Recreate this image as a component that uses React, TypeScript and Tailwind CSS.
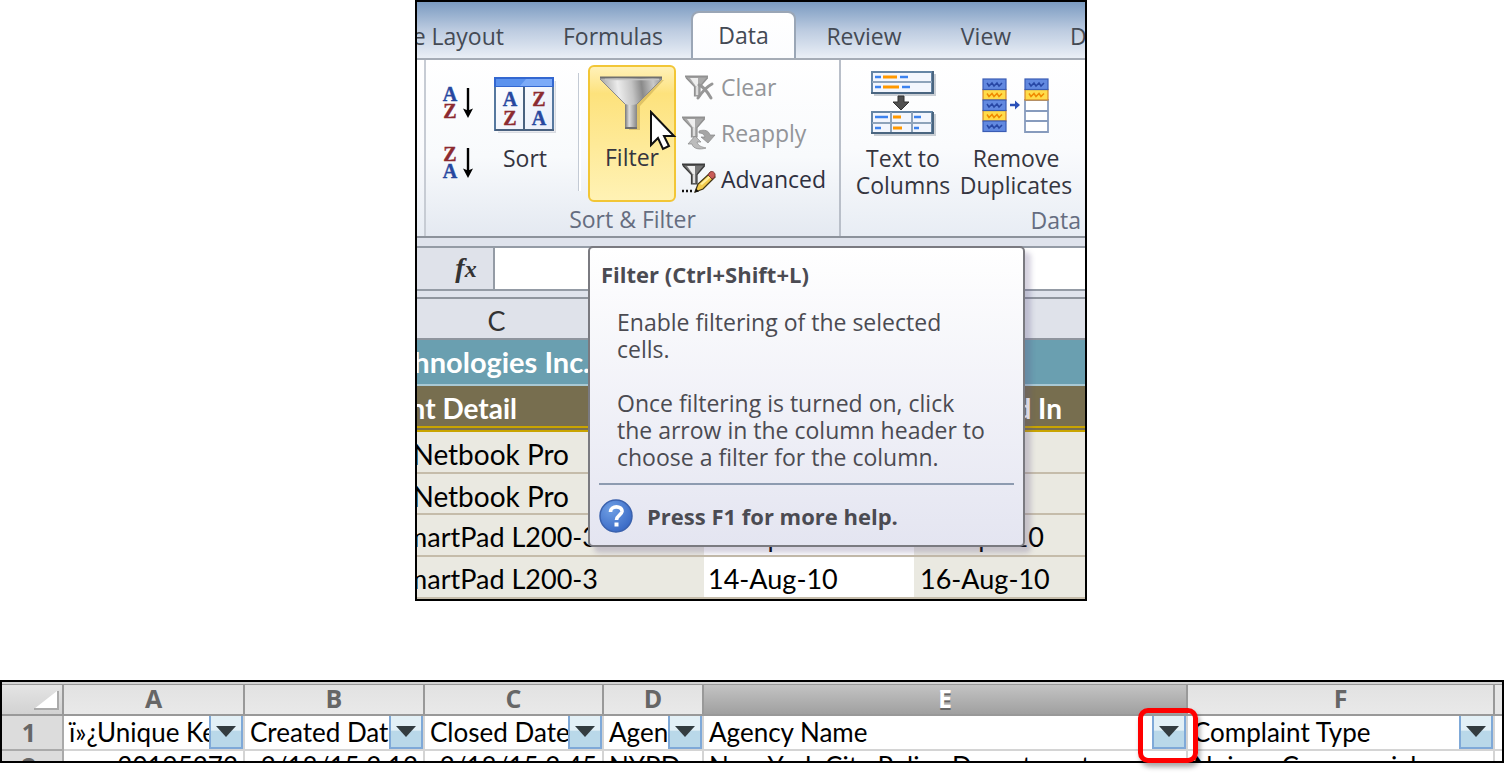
import React from "react";

const ui = "font-['Open_Sans','Noto_Sans',sans-serif]";
const cal = "font-['Lato','Noto_Sans',sans-serif]";

function Letter({ x, y, c }: { x: number; y: number; c: "A" | "Z" }) {
  const color = c === "A" ? "#27479f" : "#8c2a30";
  return (
    <text x={x} y={y} fontSize="20" fontWeight="bold" fontFamily="Liberation Serif, serif" textAnchor="middle" fill={color} stroke={color} strokeWidth=".4">
      {c}
    </text>
  );
}

function SortArrow({ first, second }: { first: "A" | "Z"; second: "A" | "Z" }) {
  return (
    <svg width="34" height="36" viewBox="0 0 34 36" overflow="visible" aria-hidden="true">
      <Letter x={8} y={15} c={first} />
      <Letter x={8} y={32} c={second} />
      <path d="M26 2v24" stroke="#000" strokeWidth="2.4" />
      <path d="M21 22.500l5 2 5-2-5 9.500z" fill="#000" />
    </svg>
  );
}

function SortIcon() {
  return (
    <svg width="62" height="56" viewBox="0 0 62 56" aria-hidden="true">
      <defs>
        <linearGradient id="sortBody" x1="0" y1="0" x2="1" y2="1">
          <stop offset="0" stopColor="#fff" />
          <stop offset="1" stopColor="#e9eefa" />
        </linearGradient>
      </defs>
      <path d="M4 55.500h57.500V4" stroke="#d9dce2" strokeWidth="2" fill="none" />
      <rect x="1" y="1" width="58" height="52" fill="url(#sortBody)" stroke="#56789f" strokeWidth="2" />
      <rect x="0" y="0" width="60" height="10" fill="#3367d0" />
      <rect x="2" y="2" width="56" height="7" fill="#5b92ee" />
      <path d="M32 2h26v7H26z" fill="#7caaf8" />
      <path d="M30 10v43M1 53h59" stroke="#49617f" strokeWidth="2" />
      <Letter x={16} y={29} c="A" />
      <Letter x={16} y={48} c="Z" />
      <Letter x={45} y={29} c="Z" />
      <Letter x={45} y={48} c="A" />
    </svg>
  );
}

function FunnelIcon() {
  return (
    <svg width="66" height="56" viewBox="0 0 66 56" aria-hidden="true">
      <defs>
        <linearGradient id="cone" x1="0" y1=".1" x2="1" y2="0">
          <stop offset="0" stopColor="#a5a5a5" />
          <stop offset=".28" stopColor="#ececec" />
          <stop offset=".5" stopColor="#c4c4c4" />
          <stop offset=".66" stopColor="#8a8a8a" />
          <stop offset=".85" stopColor="#c9c9c9" />
          <stop offset="1" stopColor="#909090" />
        </linearGradient>
        <linearGradient id="stem" x1="0" y1="0" x2="1" y2="0">
          <stop offset="0" stopColor="#777" />
          <stop offset=".35" stopColor="#ddd" />
          <stop offset="1" stopColor="#858585" />
        </linearGradient>
      </defs>
      <path d="M5 4h60L41 30v24H30V30z" fill="#a98832" opacity=".35" />
      <path d="M1 2h62v1L38 28v24H26V28L1 3z" fill="url(#cone)" />
      <path d="M26 28q6 2 12 0v24H26z" fill="url(#stem)" />
      <path d="M1 3l25 25M63 3L38 28" stroke="#8a8a8a" strokeWidth="1" />
      <path d="M1 1.500h62M26 52h12" stroke="#6f6f6f" strokeWidth="2" />
      <path d="M6 3.500h54" stroke="#c5c5c5" strokeWidth="1.500" />
    </svg>
  );
}

function SmallFunnel({ dark = false }: { dark?: boolean }) {
  const edge = dark ? "#3c3c3c" : "#919191";
  return (
    <>
      <path d="M1 1.500h22v2L15 12v9H9.500v-9L1 3.500z" fill={dark ? "#777" : "#aaa"} />
      <path d="M5 3h8v9l-2-.5z" fill="#eee" />
      <path d="M11 12h2v8h-2z" fill="#ddd" />
      <path d="M0 1.500h23" stroke={edge} strokeWidth="2" />
      <path d="M1 2.500l8.500 9v9.500H15v-9.500l7.500-9" fill="none" stroke={edge} strokeWidth="1.200" />
    </>
  );
}

function ClearIcon() {
  return (
    <svg width="34" height="32" viewBox="0 0 34 32" aria-hidden="true">
      <g transform="translate(3 4)"><SmallFunnel /></g>
      <path d="M17 14c5 2 8 6 12 13M30 13c-6 3-10 8-14 14" stroke="#979797" strokeWidth="3" strokeLinecap="round" fill="none" />
    </svg>
  );
}

function ReapplyIcon() {
  return (
    <svg width="34" height="34" viewBox="0 0 34 34" aria-hidden="true">
      <SmallFunnel />
      <path d="M17 15c6-2 10 0 11 4h5l-7 8-7-6h4c-1-3-3-4-6-4z" fill="#a5a5a5" stroke="#888" strokeWidth=".7" />
      <path d="M6 28l7-8 6 6h-4c1 4 5 5 9 6-6 2-13 1-14-4z" fill="#bcbcbc" stroke="#888" strokeWidth=".7" />
    </svg>
  );
}

function AdvancedIcon() {
  return (
    <svg width="34" height="32" viewBox="0 0 34 32" aria-hidden="true">
      <SmallFunnel dark />
      <path d="M0 28h2M4 28h2M8 28h2" stroke="#111" strokeWidth="2.500" />
      <path d="M13 29l3-8L28 10l5 4-12 12z" fill="#f3cb4d" stroke="#403515" strokeWidth="1.300" />
      <path d="M18 21l10-9 1 2-9 8z" fill="#fff0a0" />
      <path d="M26 12l2-3c3-2 7 2 4 6l-2 1z" fill="#c95c58" stroke="#7e3834" />
      <path d="M13 29.500l1-4 3 3z" fill="#111" />
    </svg>
  );
}

function TextToColumnsIcon() {
  return (
    <svg width="66" height="66" viewBox="0 0 66 66" aria-hidden="true">
      <path d="M4 25h61V4M4 65h61V44" stroke="#c9ced4" strokeWidth="2" fill="none" />
      <g fill="#f3f6fd" stroke="#6585a5" strokeWidth="2">
        <path d="M2 2h60v21H2zM2 42h60v21H2z" />
        <path d="M2 12h60M2 53h60M21 42v21M42 42v21" fill="none" stroke="#8ea3ba" />
      </g>
      <path d="M1 23h62V1M1 63h62V42" stroke="#4a6580" strokeWidth="2" fill="none" />
      <path d="M5 7h6M30 7h8M5 17h6M32 17h8M5 47h13M44 47h7M5 58h6M44 58h5" stroke="#3c82ee" strokeWidth="2.600" />
      <path d="M13 7h14M13 17h16M23 47h8M23 58h9" stroke="#ff9800" strokeWidth="3" />
      <path d="M28 26h6v6h5l-8 8-8-8h5z" fill="#505050" stroke="#333" />
    </svg>
  );
}

function Squiggle({ x, y, gold = false }: { x: number; y: number; gold?: boolean }) {
  return (
    <g transform={`translate(${x} ${y})`}>
      <rect width="23" height="10.500" fill={gold ? "#ffdc4a" : "#6289e0"} stroke={gold ? "#d48728" : "#3a5cb4"} strokeWidth="1.200" />
      <path d="M4 4l2 3 3-3 2 3 3-3 2 3 3-3" fill="none" stroke={gold ? "#f08a00" : "#2747a5"} strokeWidth="1.500" />
    </g>
  );
}

function RemoveDuplicatesIcon() {
  return (
    <svg width="68" height="56" viewBox="0 0 68 56" aria-hidden="true">
      <Squiggle x={1} y={11.5} gold />
      <Squiggle x={1} y={32.5} gold />
      <Squiggle x={1} y={1} />
      <Squiggle x={1} y={22} />
      <Squiggle x={1} y={43} />
      <path d="M28 27h7" stroke="#2a50b8" strokeWidth="2.500" />
      <path d="M33 22.500l5 4.500-5 4.500z" fill="#2a50b8" />
      <path d="M43 22h23v32H43zM43 33h23M43 43h23" fill="#fff" stroke="#879bbd" strokeWidth="1.800" />
      <Squiggle x={43} y={11.5} gold />
      <Squiggle x={43} y={1} />
    </svg>
  );
}

function Pointer() {
  return (
    <svg className="absolute left-[232px] top-[108px]" width="28" height="42" viewBox="0 0 28 42" aria-hidden="true">
      <path d="M2 2v33l7-7 5 11 6-3-5-10h10z" fill="#fff" stroke="#111" strokeWidth="2" />
    </svg>
  );
}

const tab = "h-full text-[23px] leading-[30px] text-[#444a54] whitespace-nowrap pt-[12px]";

function Tabs() {
  return (
    <nav className="flex h-[58px] items-stretch overflow-hidden border-b-2 border-[#a5acb6] bg-linear-to-b from-[#7b9bc1] via-[#bccbe0] via-50% to-[#eaeff6]">
      <div className="flex w-[87px] shrink-0 justify-end"><button className={tab}>e Layout</button></div>
      <button className={`${tab} ml-[59px] w-[100px] shrink-0`}>Formulas</button>
      <button className="-mb-[2px] ml-[28px] mt-[9px] h-[49px] w-[105px] shrink-0 rounded-t-lg border-2 border-b-0 border-[#9aa6b6] bg-linear-to-b from-white to-[#fbfcfe] pb-[4px] text-[23px] leading-[30px] text-[#444a54]">Data</button>
      <button className={`${tab} ml-[29px] w-[78px] shrink-0`}>Review</button>
      <button className={`${tab} ml-[55px] w-[56px] shrink-0`}>View</button>
      <button className={`${tab} ml-[56px] shrink-0`}>D</button>
    </nav>
  );
}

const big = "text-[23px] leading-[27px] text-[#35353f]";

function Ribbon() {
  return (
    <div className="flex h-[178px] overflow-hidden border-b-2 border-[#8c929b] bg-linear-to-b from-white via-[#fafbfd] to-[#e8edf4]">
      <div className="w-[9px] shrink-0 border-r-2 border-[#c7ccd4]" />
      <section className="flex w-[415px] shrink-0 flex-col border-r-2 border-[#b9bfc9] bg-linear-to-b from-white via-[#f8fafc] via-55% to-[#e4e9f1]">
        <div className="flex h-[143px] pt-[5px]">
          <div className="ml-[16px] flex w-[34px] flex-col gap-[24px] pt-[21px]">
            <button aria-label="Sort A to Z"><SortArrow first="A" second="Z" /></button>
            <button aria-label="Sort Z to A"><SortArrow first="Z" second="A" /></button>
          </div>
          <button className={`${big} ml-[18px] flex w-[62px] flex-col items-center gap-[12px] pt-[12px]`}>
            <SortIcon />
            Sort
          </button>
          <div className="ml-[22px] mt-[8px] h-[118px] w-[3px] border-l border-[#c3cad4] bg-white" />
          <button className={`${big} ml-[7px] flex h-[137px] w-[88px] flex-col items-center gap-[12px] rounded-md border-2 border-[#f2c636] bg-linear-to-b from-[#fff1b8] via-[#fde27c] via-20% to-[#fff2b4] pt-[9px]`}>
            <FunnelIcon />
            Filter
          </button>
          <div className="-mt-[1px] ml-[6px] flex flex-col text-[23px] leading-[46px]">
            <button className="flex items-center gap-[5px] text-[#939599]"><ClearIcon />Clear</button>
            <button className="flex items-center gap-[5px] text-[#939599]"><ReapplyIcon />Reapply</button>
            <button className="flex items-center gap-[5px] text-[#2e3040]"><AdvancedIcon />Advanced</button>
          </div>
        </div>
        <div className="text-center text-[23px] leading-[34px] text-[#656d80]">Sort &amp; Filter</div>
      </section>
      <section className="min-w-0 flex-1">
        <div className="flex h-[143px] pt-[10px]">
          <button className={`${big} ml-[12px] flex w-[100px] shrink-0 flex-col items-center gap-[9px]`}>
            <TextToColumnsIcon />
            <span>Text to<br />Columns</span>
          </button>
          <button className={`${big} ml-[4px] flex w-[118px] shrink-0 flex-col items-center gap-[11px] pt-[8px]`}>
            <RemoveDuplicatesIcon />
            <span>Remove<br />Duplicates</span>
          </button>
        </div>
        <div className="pr-[4px] text-right text-[23px] leading-[34px] text-[#656d80]">Data</div>
      </section>
    </div>
  );
}

function FormulaBar() {
  return (
    <div className="mt-[8px] flex h-[45px] border-y-2 border-[#949ba5] bg-white">
      <button className="w-[78px] border-r-2 border-[#949ba5] bg-[#dfe2ea] pl-[22px] font-['Liberation_Serif',serif] text-[28px] font-bold italic leading-[36px] text-[#333]">
        f<span className="text-[24px]">x</span>
      </button>
      <input aria-label="Formula" className="min-w-0 flex-1 bg-transparent outline-none" />
    </div>
  );
}

function Clipped({ children, pad }: { children: React.ReactNode; pad: string }) {
  return <div className={`flex justify-end overflow-hidden whitespace-nowrap ${pad}`}>{children}</div>;
}

const line = "border-b-2 border-[#c5bcaa] pb-0 pt-[4px]";
const headCell = "border-b-2 border-t-2 border-[#8f959e] pb-0 pt-[4px]";
const goldLine = "border-b-6 border-double border-[#c9a400] pb-0 pt-[4px]";

function Sheet() {
  return (
    <table className={`${cal} mt-[6px] w-full table-fixed border-separate border-spacing-0 text-left text-[27px] leading-[34px] text-black`}>
      <colgroup><col className="w-[287px]" /><col className="w-[210px]" /><col /></colgroup>
      <thead>
        <tr className="h-[43px] bg-[#dfe2ea] text-[#333]">
          <th className={`${headCell} pr-[128px] text-center font-normal`}>C</th>
          <th className={headCell} />
          <th className={headCell} />
        </tr>
      </thead>
      <tbody>
        <tr className="h-[46px] bg-[#6a9fb0] text-[29px] font-bold text-white">
          <td className="border-b-2 border-[#a9c9d4]"><Clipped pad="pr-[114px]">hnologies Inc.</Clipped></td>
          <td className="border-b-2 border-[#a9c9d4]" /><td className="border-b-2 border-[#a9c9d4]" />
        </tr>
        <tr className="h-[46px] bg-[#776e4f] text-[28px] font-bold text-white">
          <td className={goldLine}><Clipped pad="pr-[187px]">nt Detail</Clipped></td>
          <td className={goldLine} />
          <td className={goldLine}><Clipped pad="pr-[23px]">Turned In</Clipped></td>
        </tr>
        <tr className="h-[42px] bg-[#eae9e1] text-[28px]"><td className={line}><Clipped pad="pr-[135px]">Netbook Pro</Clipped></td><td className={line} /><td className={line} /></tr>
        <tr className="h-[41px] bg-[#eae9e1] text-[28px]"><td className={line}><Clipped pad="pr-[135px]">Netbook Pro</Clipped></td><td className={line} /><td className={line} /></tr>
        <tr className="h-[42px] bg-[#eae9e1]">
          <td className={line}><Clipped pad="pr-[106px]">SmartPad L200-3</Clipped></td>
          <td className={`${line} bg-white pl-[4px]`}>10-Apr-10</td>
          <td className={line}><Clipped pad="pr-[41px]">12-Apr-10</Clipped></td>
        </tr>
        <tr className="h-[42px] bg-[#eae9e1]">
          <td className={line}><Clipped pad="pr-[106px]">SmartPad L200-3</Clipped></td>
          <td className={`${line} bg-white pl-[4px]`}>14-Aug-10</td>
          <td className={`${line} pl-[6px]`}>16-Aug-10</td>
        </tr>
      </tbody>
    </table>
  );
}

function Tooltip() {
  return (
    <div role="tooltip" className="absolute left-[171px] top-[244px] w-[437px] rounded-[5px] border-2 border-[#7a7a80] bg-linear-to-b from-white to-[#e4e5f1] px-[9px] pb-[12px] pt-[10px] text-[23px] leading-[27px] text-[#4b4b52] shadow-[6px_6px_5px_rgba(90,80,130,0.25)]">
      <h2 className="pl-[2px] text-[22px] font-bold leading-[32px]">Filter (Ctrl+Shift+L)</h2>
      <p className="mt-[19px] whitespace-nowrap pl-[18px]">Enable filtering of the selected<br />cells.</p>
      <p className="mt-[27px] whitespace-nowrap pl-[18px]">Once filtering is turned on, click<br />the arrow in the column header to<br />choose a filter for the column.</p>
      <div className="mt-[12px] flex items-center gap-[14px] border-t-2 border-[#8d9bb0] pt-[14px] text-[22px] font-bold">
        <svg width="34" height="34" viewBox="0 0 34 34" aria-hidden="true">
          <defs><radialGradient id="help" cx=".35" cy=".3" r=".8"><stop offset="0" stopColor="#6f9fe4" /><stop offset="1" stopColor="#3565c3" /></radialGradient></defs>
          <circle cx="17" cy="17" r="16" fill="url(#help)" stroke="#3a61ad" strokeWidth="1.500" />
          <path d="M11.500 13c0-7 12-6.500 11.500-.5C22.500 16 17.500 16.500 17.500 21" fill="none" stroke="#fff" strokeWidth="3.600" />
          <rect x="15.500" y="23.500" width="4" height="4" fill="#fff" />
        </svg>
        Press F1 for more help.
      </div>
    </div>
  );
}

function FilterButton({ label }: { label: string }) {
  return (
    <button aria-label={`Filter ${label}`} className="flex h-[33px] w-[34px] shrink-0 items-center justify-center border-2 border-t-0 border-[#7fa9d8] bg-linear-to-b from-[#e3f0f6] from-45% to-[#b9d8e9] to-50%">
      <svg width="20" height="11" viewBox="0 0 20 11" aria-hidden="true"><path d="M0 0h20L10 11z" fill="#333c40" /></svg>
    </button>
  );
}

const heads = ["ï»¿Unique Key", "Created Date", "Closed Date", "Agency", "Agency Name", "Complaint Type"];
const letters = ["A", "B", "C", "D", "E", "F"];
const values = ["30195272", "2/18/15 2:12", "2/18/15 2:45", "NYPD", "New York City Police Department", "Noise - Commercial"];

function DataStrip() {
  return (
    <div className="mt-[79px] h-[83px] overflow-hidden border-2 border-black bg-[#d4d4d4] pt-[2px]">
      <table className={`${cal} w-full table-fixed border-separate border-spacing-0 text-left text-[26px] leading-[30px] text-black`}>
        <colgroup>
          <col className="w-[62px]" /><col className="w-[181px]" /><col className="w-[180px]" /><col className="w-[179px]" /><col className="w-[100px]" /><col /><col className="w-[307px]" /><col className="w-[7px]" />
        </colgroup>
        <thead>
          <tr className="h-[32px] font-['Open_Sans',sans-serif] text-[25px] text-[#666]">
            <th className="border-b-2 border-r-2 border-t border-[#999] bg-linear-to-b from-[#e4e4e4] to-[#d2d2d2] p-0">
              <svg className="ml-auto mr-[3px]" width="26" height="20" viewBox="0 0 26 20" aria-hidden="true"><path d="M1 19L24 1v18z" fill="#fff" /><path d="M1 19h24V1" fill="none" stroke="#aaa" strokeWidth="2" /></svg>
            </th>
            {letters.map((l) => (
              <th key={l} className={`border-b-2 border-r-2 border-t border-[#999] p-0 pb-[2px] text-center font-bold leading-[27px] ${l === "E" ? "bg-linear-to-b from-[#c3c3c3] to-[#a0a0a0] text-white [text-shadow:0_2px_0_#666]" : "bg-linear-to-b from-[#e2e2e2] to-[#e9e9e9]"}`}>{l}</th>
            ))}
            <th className="border-b-2 border-t border-[#999] bg-[#e6e6e6]" />
          </tr>
        </thead>
        <tbody>
          <tr className="h-[35px] bg-white">
            <th className="border-b-2 border-r-2 border-[#aaa] bg-[#dcdcdc] p-0 pb-[2px] pr-[6px] text-center font-['Open_Sans',sans-serif] text-[25px] text-[#666]">1</th>
            {heads.map((h) => (
              <td key={h} className="border-b-2 border-r-2 border-[#d4d4d4] p-0">
                <div className="flex items-start">
                  <span className="min-w-0 flex-1 overflow-hidden whitespace-nowrap pl-[5px] leading-[32px]">{h}</span>
                  <FilterButton label={h} />
                </div>
              </td>
            ))}
            <td className="border-b-2 border-[#d4d4d4]" />
          </tr>
          <tr className="bg-white leading-[30px]">
            <th className="border-r-2 border-[#aaa] bg-[#dcdcdc] p-0 pr-[6px] text-center font-['Open_Sans',sans-serif] text-[25px] text-[#666]">2</th>
            {values.map((v, i) => (
              <td key={v} className={`overflow-hidden whitespace-nowrap border-r-2 border-[#d4d4d4] px-[5px] py-0 ${i < 3 ? "text-right" : ""}`}>{v}</td>
            ))}
            <td />
          </tr>
        </tbody>
      </table>
    </div>
  );
}

export default function App() {
  return (
    <main className={`${ui} min-h-screen bg-white`}>
      <div className="pr-[2px]">
        <div className="relative mx-auto w-full max-w-[672px] overflow-hidden border-2 border-black bg-[#dfe3ec]">
          <Tabs />
          <Ribbon />
          <FormulaBar />
          <Sheet />
          <Tooltip />
          <Pointer />
        </div>
      </div>
      <div className="relative">
        <DataStrip />
        <div className="absolute right-[306px] top-[28px] h-[55px] w-[60px] rounded-[10px] border-5 border-[#f00] shadow-[2px_4px_5px_rgba(0,0,0,0.35)]" />
      </div>
    </main>
  );
}
